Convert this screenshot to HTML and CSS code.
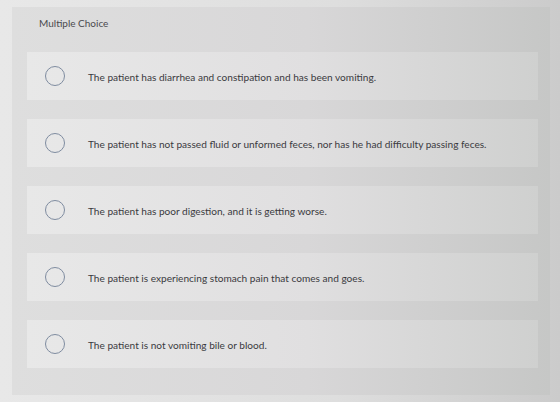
FILE: index.html
```html
<!DOCTYPE html>
<html lang="en">
<head>
    <meta charset="UTF-8">
    <meta name="viewport" content="width=device-width, initial-scale=1.0">
    <title>Multiple Choice</title>
    <link rel="stylesheet" href="styles.css">
</head>
<body>
    <div class="question">
        <div class="question-title">Multiple Choice</div>

        <div class="choices">
            <label class="choice">
                <span class="radio"></span>
                <span class="choice-text">The patient has diarrhea and constipation and has been vomiting.</span>
            </label>
            <label class="choice">
                <span class="radio"></span>
                <span class="choice-text">The patient has not passed fluid or unformed feces, nor has he had difficulty passing feces.</span>
            </label>
            <label class="choice">
                <span class="radio"></span>
                <span class="choice-text">The patient has poor digestion, and it is getting worse.</span>
            </label>
            <label class="choice">
                <span class="radio"></span>
                <span class="choice-text">The patient is experiencing stomach pain that comes and goes.</span>
            </label>
            <label class="choice">
                <span class="radio"></span>
                <span class="choice-text">The patient is not vomiting bile or blood.</span>
            </label>
        </div>
    </div>
</body>
</html>
```

FILE: styles.css
```css
body {
    font-family: 'Lato', 'Open Sans', sans-serif;
    background: linear-gradient(to right, #e8e8e8, #dedede 60%, #cbcbcb);
    color: #3f3f42;
    margin: 0;
    height: 402px;
    overflow: hidden;
}

/* Question card */
.question {
    margin: 7px 10px 0 12px;
    height: 388px;
    background: linear-gradient(to right, #dedede, #d8d7d8 55%, #c6c7c6);
}

.question-title {
    height: 45px;
    padding: 10px 0 0 27px;
    box-sizing: border-box;
    font-size: 10px;
    color: #4a4a4e;
}

/* Answer rows */
.choices {
    display: flex;
    flex-direction: column;
    gap: 19px;
    padding: 0 12px 0 15px;
}

.choice {
    display: flex;
    align-items: center;
    height: 48px;
    padding-top: 2px;
    box-sizing: border-box;
    background: linear-gradient(to right, #e8e8e8, #e0dfe0 55%, #cfd0cf);
    cursor: pointer;
}

.radio {
    width: 18px;
    height: 18px;
    margin: -2px 0 0 18px;
    border: 1.6px solid #7f8ca0;
    border-radius: 50%;
    flex-shrink: 0;
}

.choice-text {
    margin-left: 23px;
    font-size: 10.1px;
    color: #3a3a3e;
}
```
